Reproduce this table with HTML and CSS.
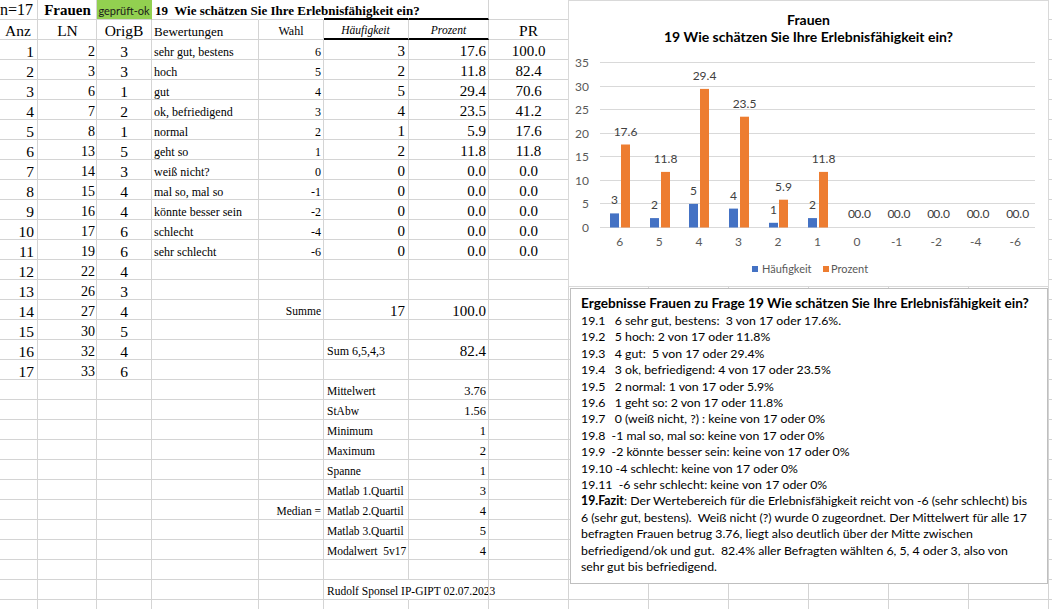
FILE: index.html
```html
<!DOCTYPE html>
<html lang="de">
<head>
<meta charset="utf-8">
<title>Frauen 19</title>
<link rel="stylesheet" href="styles.css">
</head>
<body>
<div class="sheet">
<div class="grid">
<div class="row"><span class="hn">n=17</span><span class="hb">Frauen</span><span class="ok">geprüft-ok</span><span class="ht nb">19  Wie schätzen Sie Ihre Erlebnisfähigkeit ein?</span><span class="nb"></span><span class="nb tk"></span><span class="tk"></span><span></span><span></span><span></span><span></span><span></span><span></span><span></span><span></span></div>
<div class="row"><span class="hc">Anz</span><span class="hc">LN</span><span class="hc">OrigB</span><span class="hd">Bewertungen</span><span class="wahl">Wahl</span><span class="it tk">Häufigkeit</span><span class="it tk">Prozent</span><span class="hc">PR</span><span></span><span></span><span></span><span></span><span></span><span></span><span></span></div>
<div class="row"><span>1</span><span>2</span><span>3</span><span>sehr gut, bestens</span><span>6</span><span>3</span><span>17.6</span><span>100.0</span><span></span><span></span><span></span><span></span><span></span><span></span><span></span></div>
<div class="row"><span>2</span><span>3</span><span>3</span><span>hoch</span><span>5</span><span>2</span><span>11.8</span><span>82.4</span><span></span><span></span><span></span><span></span><span></span><span></span><span></span></div>
<div class="row"><span>3</span><span>6</span><span>1</span><span>gut</span><span>4</span><span>5</span><span>29.4</span><span>70.6</span><span></span><span></span><span></span><span></span><span></span><span></span><span></span></div>
<div class="row"><span>4</span><span>7</span><span>2</span><span>ok, befriedigend</span><span>3</span><span>4</span><span>23.5</span><span>41.2</span><span></span><span></span><span></span><span></span><span></span><span></span><span></span></div>
<div class="row"><span>5</span><span>8</span><span>1</span><span>normal</span><span>2</span><span>1</span><span>5.9</span><span>17.6</span><span></span><span></span><span></span><span></span><span></span><span></span><span></span></div>
<div class="row"><span>6</span><span>13</span><span>5</span><span>geht so</span><span>1</span><span>2</span><span>11.8</span><span>11.8</span><span></span><span></span><span></span><span></span><span></span><span></span><span></span></div>
<div class="row"><span>7</span><span>14</span><span>3</span><span>weiß nicht?</span><span>0</span><span>0</span><span>0.0</span><span>0.0</span><span></span><span></span><span></span><span></span><span></span><span></span><span></span></div>
<div class="row"><span>8</span><span>15</span><span>4</span><span>mal so, mal so</span><span>-1</span><span>0</span><span>0.0</span><span>0.0</span><span></span><span></span><span></span><span></span><span></span><span></span><span></span></div>
<div class="row"><span>9</span><span>16</span><span>4</span><span>könnte besser sein</span><span>-2</span><span>0</span><span>0.0</span><span>0.0</span><span></span><span></span><span></span><span></span><span></span><span></span><span></span></div>
<div class="row"><span>10</span><span>17</span><span>6</span><span>schlecht</span><span>-4</span><span>0</span><span>0.0</span><span>0.0</span><span></span><span></span><span></span><span></span><span></span><span></span><span></span></div>
<div class="row"><span>11</span><span>19</span><span>6</span><span>sehr schlecht</span><span>-6</span><span>0</span><span>0.0</span><span>0.0</span><span></span><span></span><span></span><span></span><span></span><span></span><span></span></div>
<div class="row"><span>12</span><span>22</span><span>4</span><span></span><span></span><span></span><span></span><span></span><span></span><span></span><span></span><span></span><span></span><span></span><span></span></div>
<div class="row"><span>13</span><span>26</span><span>3</span><span></span><span></span><span></span><span></span><span></span><span></span><span></span><span></span><span></span><span></span><span></span><span></span></div>
<div class="row"><span>14</span><span>27</span><span>4</span><span></span><span class="sm">Summe</span><span>17</span><span>100.0</span><span></span><span></span><span></span><span></span><span></span><span></span><span></span><span></span></div>
<div class="row"><span>15</span><span>30</span><span>5</span><span></span><span></span><span></span><span></span><span></span><span></span><span></span><span></span><span></span><span></span><span></span><span></span></div>
<div class="row"><span>16</span><span>32</span><span>4</span><span></span><span></span><span class="lb12">Sum 6,5,4,3</span><span>82.4</span><span></span><span></span><span></span><span></span><span></span><span></span><span></span><span></span></div>
<div class="row"><span>17</span><span>33</span><span>6</span><span></span><span></span><span></span><span></span><span></span><span></span><span></span><span></span><span></span><span></span><span></span><span></span></div>
<div class="row"><span></span><span></span><span></span><span></span><span></span><span class="lb">Mittelwert</span><span class="v">3.76</span><span></span><span></span><span></span><span></span><span></span><span></span><span></span><span></span></div>
<div class="row"><span></span><span></span><span></span><span></span><span></span><span class="lb">StAbw</span><span class="v">1.56</span><span></span><span></span><span></span><span></span><span></span><span></span><span></span><span></span></div>
<div class="row"><span></span><span></span><span></span><span></span><span></span><span class="lb">Minimum</span><span class="v">1</span><span></span><span></span><span></span><span></span><span></span><span></span><span></span><span></span></div>
<div class="row"><span></span><span></span><span></span><span></span><span></span><span class="lb">Maximum</span><span class="v">2</span><span></span><span></span><span></span><span></span><span></span><span></span><span></span><span></span></div>
<div class="row"><span></span><span></span><span></span><span></span><span></span><span class="lb">Spanne</span><span class="v">1</span><span></span><span></span><span></span><span></span><span></span><span></span><span></span><span></span></div>
<div class="row"><span></span><span></span><span></span><span></span><span></span><span class="lb">Matlab 1.Quartil</span><span class="v">3</span><span></span><span></span><span></span><span></span><span></span><span></span><span></span><span></span></div>
<div class="row"><span></span><span></span><span></span><span></span><span class="sm">Median =</span><span class="lb">Matlab 2.Quartil</span><span class="v">4</span><span></span><span></span><span></span><span></span><span></span><span></span><span></span><span></span></div>
<div class="row"><span></span><span></span><span></span><span></span><span></span><span class="lb">Matlab 3.Quartil</span><span class="v">5</span><span></span><span></span><span></span><span></span><span></span><span></span><span></span><span></span></div>
<div class="row"><span></span><span></span><span></span><span></span><span></span><span class="lb">Modalwert  5v17</span><span class="v">4</span><span></span><span></span><span></span><span></span><span></span><span></span><span></span><span></span></div>
<div class="row"><span></span><span></span><span></span><span></span><span></span><span></span><span></span><span></span><span></span><span></span><span></span><span></span><span></span><span></span><span></span></div>
<div class="row"><span></span><span></span><span></span><span></span><span></span><span class="lb nb">Rudolf Sponsel IP-GIPT 02.07.2023</span><span></span><span></span><span></span><span></span><span></span><span></span><span></span><span></span><span></span></div>
<div class="row"><span></span><span></span><span></span><span></span><span></span><span></span><span></span><span></span><span></span><span></span><span></span><span></span><span></span><span></span><span></span></div>
</div>

<div class="chart">
<svg class="chart-svg" width="481" height="287" viewBox="0 0 481 287">
<rect x="0.5" y="0.5" width="480" height="286" fill="#fff" stroke="#d9d9d9"/>
<text class="ttl" x="240.5" y="25" text-anchor="middle">Frauen</text>
<text class="ttl" x="240.5" y="42" text-anchor="middle">19  Wie schätzen Sie Ihre Erlebnisfähigkeit ein?</text>
<g stroke="#d9d9d9" stroke-width="1">
<line x1="32" x2="467" y1="62.5" y2="62.5"/>
<line x1="32" x2="467" y1="86.5" y2="86.5"/>
<line x1="32" x2="467" y1="109.5" y2="109.5"/>
<line x1="32" x2="467" y1="133.5" y2="133.5"/>
<line x1="32" x2="467" y1="156.5" y2="156.5"/>
<line x1="32" x2="467" y1="180.5" y2="180.5"/>
<line x1="32" x2="467" y1="203.5" y2="203.5"/>
<line x1="32" x2="467" y1="227.5" y2="227.5"/>
</g>
<g class="ax" text-anchor="end">
<text x="21" y="66.5">35</text>
<text x="21" y="90.5">30</text>
<text x="21" y="113.5">25</text>
<text x="21" y="137.5">20</text>
<text x="21" y="160.5">15</text>
<text x="21" y="184.5">10</text>
<text x="21" y="207.5">5</text>
<text x="21" y="231.5">0</text>
</g>
<g fill="#4472c4">
<rect x="42" y="213.4" width="9" height="14.1"/>
<rect x="82" y="218.1" width="9" height="9.4"/>
<rect x="121" y="203.9" width="9" height="23.6"/>
<rect x="161" y="208.6" width="9" height="18.9"/>
<rect x="201" y="222.8" width="9" height="4.7"/>
<rect x="240" y="218.1" width="9" height="9.4"/>
</g>
<g fill="#ed7d31">
<rect x="53" y="144.5" width="9" height="83"/>
<rect x="93" y="171.9" width="9" height="55.6"/>
<rect x="132" y="88.9" width="9" height="138.6"/>
<rect x="172" y="116.7" width="9" height="110.8"/>
<rect x="211" y="199.7" width="9" height="27.8"/>
<rect x="251" y="171.9" width="9" height="55.6"/>
</g>
<g class="dl" text-anchor="middle">
<text x="46.5" y="204.4">3</text>
<text x="57.5" y="135.5">17.6</text>
<text x="86.5" y="209.1">2</text>
<text x="97.5" y="162.9">11.8</text>
<text x="125.5" y="194.9">5</text>
<text x="136.5" y="79.9">29.4</text>
<text x="165.5" y="199.6">4</text>
<text x="176.5" y="107.7">23.5</text>
<text x="205.5" y="213.8">1</text>
<text x="215.5" y="190.7">5.9</text>
<text x="244.5" y="209.1">2</text>
<text x="255.5" y="162.9">11.8</text>
<text x="283.6" y="218">0</text><text x="294.6" y="218">0.0</text>
<text x="323.1" y="218">0</text><text x="334.1" y="218">0.0</text>
<text x="362.7" y="218">0</text><text x="373.7" y="218">0.0</text>
<text x="402.2" y="218">0</text><text x="413.2" y="218">0.0</text>
<text x="441.8" y="218">0</text><text x="452.8" y="218">0.0</text>
</g>
<g class="ax" text-anchor="middle">
<text x="51.8" y="246">6</text>
<text x="91.3" y="246">5</text>
<text x="130.9" y="246">4</text>
<text x="170.4" y="246">3</text>
<text x="210" y="246">2</text>
<text x="249.5" y="246">1</text>
<text x="289.1" y="246">0</text>
<text x="328.6" y="246">-1</text>
<text x="368.2" y="246">-2</text>
<text x="407.7" y="246">-4</text>
<text x="447.3" y="246">-6</text>
</g>
<rect x="184" y="266" width="6" height="6" fill="#4472c4"/>
<text class="lg" x="194" y="273">Häufigkeit</text>
<rect x="255" y="266" width="6" height="6" fill="#ed7d31"/>
<text class="lg" x="263" y="273">Prozent</text>
</svg>
</div>

<div class="tb">
<p class="t">Ergebnisse Frauen zu Frage 19 Wie schätzen Sie Ihre Erlebnisfähigkeit ein?</p>
<p>19.1   6 sehr gut, bestens:  3 von 17 oder 17.6%.</p>
<p>19.2   5 hoch: 2 von 17 oder 11.8%</p>
<p>19.3   4 gut:  5 von 17 oder 29.4%</p>
<p>19.4   3 ok, befriedigend: 4 von 17 oder 23.5%</p>
<p>19.5   2 normal: 1 von 17 oder 5.9%</p>
<p>19.6   1 geht so: 2 von 17 oder 11.8%</p>
<p>19.7   0 (weiß nicht, ?) : keine von 17 oder 0%</p>
<p>19.8  -1 mal so, mal so: keine von 17 oder 0%</p>
<p>19.9  -2 könnte besser sein: keine von 17 oder 0%</p>
<p>19.10 -4 schlecht: keine von 17 oder 0%</p>
<p>19.11  -6 sehr schlecht: keine von 17 oder 0%</p>
<p><b>19.Fazit</b>: Der Wertebereich für die Erlebnisfähigkeit reicht von -6 (sehr schlecht) bis</p>
<p>6 (sehr gut, bestens).  Weiß nicht (?) wurde 0 zugeordnet. Der Mittelwert für alle 17</p>
<p>befragten Frauen betrug 3.76, liegt also deutlich über der Mitte zwischen</p>
<p>befriedigend/ok und gut.  82.4% aller Befragten wählten 6, 5, 4 oder 3, also von</p>
<p>sehr gut bis befriedigend.</p>
</div>
</div>
</body>
</html>
```
FILE: styles.css
```css
html, body {
  margin: 0;
  padding: 0;
  background: #fff;
}
body {
  font-family: "Liberation Serif", "Times New Roman", serif;
  color: #000;
  width: 1052px;
  height: 609px;
  overflow: hidden;
}
.sheet {
  position: relative;
  width: 1052px;
  height: 609px;
  overflow: hidden;
}
.grid {
  display: flex;
  flex-direction: column;
}
.row {
  display: grid;
  grid-template-columns: 38px 59px 55px 107px 65px 85px 80px 80px 80px 80px 80px 80px 80px 80px 80px;
  height: 20px;
}
.row > span {
  box-sizing: border-box;
  height: 20px;
  border-right: 1px solid #d4d4d4;
  border-bottom: 1px solid #d4d4d4;
  display: flex;
  align-items: flex-end;
  padding: 0 2px 1px 2px;
  line-height: 1;
  white-space: pre;
  font-size: 12px;
}
/* default column formats */
.row > :nth-child(1) { justify-content: flex-end; font-size: 15.5px; padding-right: 3px; padding-bottom: 0; }
.row > :nth-child(2) { justify-content: flex-end; font-size: 14px; padding-right: 1px; padding-bottom: 0; }
.row > :nth-child(3) { justify-content: center; font-size: 15.5px; padding-bottom: 0; }
.row > :nth-child(4) { justify-content: flex-start; font-size: 12px; padding-left: 2px; }
.row > :nth-child(5) { justify-content: flex-end; font-size: 12px; }
.row > :nth-child(6) { justify-content: flex-end; font-size: 15px; padding-right: 3px; padding-bottom: 0; }
.row > :nth-child(7) { justify-content: flex-end; font-size: 15px; padding-right: 2px; padding-bottom: 0; }
.row > :nth-child(8) { justify-content: center; font-size: 15px; padding-bottom: 0; }

/* special cells */
.row > .hn { justify-content: flex-start; font-size: 16px; padding-left: 0; padding-bottom: 1px; }
.row > .hb { justify-content: center; font-weight: bold; font-size: 15px; padding-bottom: 1px; }
.row > .ok {
  justify-content: center;
  background: #92d050;
  border-right-color: #92d050;
  font-family: Lato, "Liberation Sans", sans-serif;
  font-size: 11px;
  padding-bottom: 3px;
  color: #1a1a1a;
}
.row > .ht { font-weight: bold; font-size: 13px; padding-left: 3px; padding-bottom: 2px; }
.row > .nb { border-right-color: transparent; }
.row > .tk { border-bottom: 2px solid #000; }
.row > .hc { justify-content: center; font-size: 15.5px; padding-bottom: 1px; }
.row > .hd { font-size: 13px; }
.row > .wahl { justify-content: center; font-size: 12px; padding-bottom: 2px; }
.row > .it { justify-content: center; font-style: italic; font-size: 11.5px; padding-bottom: 2px; }
.row > .sm { justify-content: flex-end; font-size: 11.5px; padding-bottom: 2px; }
.row > .lb { justify-content: flex-start; font-size: 11.5px; padding-left: 3px; padding-bottom: 2px; }
.row > .lb12 { justify-content: flex-start; font-size: 12px; padding-left: 3px; padding-bottom: 2px; }
.row > .v { justify-content: flex-end; font-size: 12.5px; padding-bottom: 2px; }

/* chart */
.chart {
  position: absolute;
  left: 568px;
  top: 0;
  width: 481px;
  height: 287px;
  background: #fff;
}
.chart-svg { display: block; }
.ttl {
  font-family: Lato, "Open Sans", sans-serif;
  font-weight: bold;
  font-size: 14px;
  fill: #000;
}
.ax {
  font-family: Lato, "Open Sans", sans-serif;
  font-size: 12px;
  fill: #595959;
}
.lg {
  font-family: Lato, "Open Sans", sans-serif;
  font-size: 11px;
  fill: #595959;
}
.dl {
  font-family: Lato, "Open Sans", sans-serif;
  font-size: 12px;
  fill: #404040;
}

/* text box */
.tb {
  position: absolute;
  left: 570px;
  top: 288px;
  width: 478px;
  height: 296px;
  box-sizing: border-box;
  border: 1px solid #bfbfbf;
  background: #fff;
  padding: 5px 6px 0 10px;
  font-family: Lato, "Noto Sans", sans-serif;
  font-size: 12.3px;
  line-height: 16.4px;
  color: #000;
}
.tb p {
  margin: 0;
  white-space: pre;
}
.tb .t {
  font-weight: bold;
  font-size: 13.6px;
  line-height: 19px;
}
```
